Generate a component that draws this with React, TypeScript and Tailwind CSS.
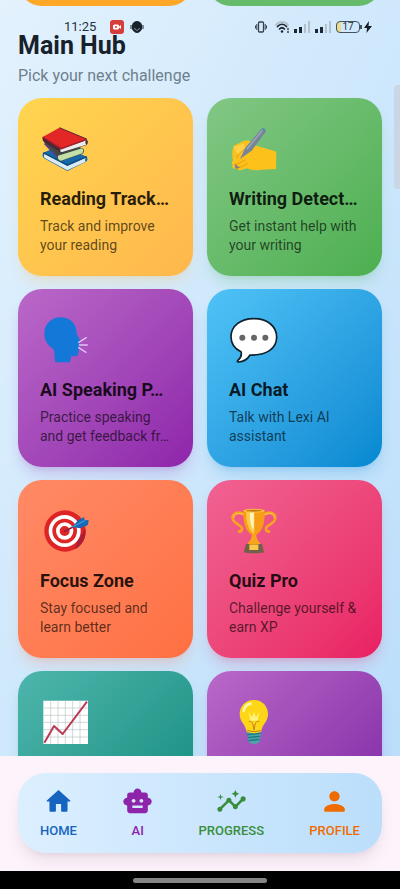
import React from "react";
import { MdInsights, MdSmartToy } from "react-icons/md";

interface HubCard {
  id: string;
  title: string;
  lines: string[];
  gradient: string;
  icon: React.ReactNode;
}

interface NavItem {
  id: string;
  label: string;
  color: string;
  icon: React.ReactNode;
}

const BooksIcon = () => (
  <svg viewBox="90 99 150 150" className="size-[50px]" aria-hidden="true">
    {/* blue book */}
    <path d="M100 188l52-22 78 34c4 4 3 12-2 15l-56 28-70-38c-5-5-6-12-2-17z" fill="#1668a8" />
    <path d="M104 192l68 36 56-25c-4 4-4 8-1 12l-55 26-68-37c-3-4-3-8 0-12z" fill="#dcebf2" />
    <path d="M100 188l72 37 58-25" fill="none" stroke="#0d4a7d" strokeWidth="4" />
    {/* green book */}
    <path d="M102 156l46-10 72 30c3 5 2 12-2 15l-66 23c-8-1-12-7-11-13z" fill="#3c4a42" />
    <path d="M144 197l72-22c5 4 4 10 1 15l-64 22c-8-1-11-8-9-15z" fill="#c5dfa8" />
    <path d="M104 160l38 40" stroke="#5b3d72" strokeWidth="6" />
    {/* red book */}
    <path d="M98 141c-2 7 1 13 6 16l50 31 76-23c5-6 5-13-1-17z" fill="#4a2734" />
    <path d="M153 176l76-25c-4 4-4 9 0 13l-72 22c-7 1-8-6-4-10z" fill="#e7edef" />
    <path d="M98 141l50-28 82 34-76 28z" fill="#e32727" />
    <path d="M98 141l56 35 76-28" fill="none" stroke="#a91d28" strokeWidth="4" />
    <path d="M148 113l82 34" stroke="#5b2430" strokeWidth="3" />
  </svg>
);

const WritingIcon = () => (
  <svg viewBox="87 99 150 150" className="size-[50px]" aria-hidden="true">
    <path
      d="M101 168l28-14c8-4 18-3 24 1l16 12 57 17c3 1 3 4 3 7l-1 46-45 2c-15 4-30 1-42-4l-20 6c-5 1-9-3-7-7l-9 3c-7-1-10-7-7-12-4-5-3-10 1-14-3-14-3-30 2-43z"
      fill="#fcc21b"
    />
    <path d="M101 170l15 28 20-14-4-23z" fill="#fdd24a" />
    <path
      d="M104 224c12-2 22-7 30-13M112 234c14-3 24-8 32-15M136 176c-10 8-20 16-26 26"
      fill="none"
      stroke="#eeaa10"
      strokeWidth="4"
      strokeLinecap="round"
    />
    <path d="M183 118l14 8-42 56-35 25 16-34z" fill="#758698" />
    <path d="M183 118l4-3c3-2 11 2 10 6v5z" fill="#5686ad" />
    <path d="M187 121l-46 56" stroke="#a3aab5" strokeWidth="4" />
    <path d="M104 221l16 12-14 3z" fill="#7e7f87" />
  </svg>
);

const SpeakingIcon = () => (
  <svg viewBox="90 87 150 150" className="size-[50px]" aria-hidden="true">
    <path
      d="M153 97c-28-1-50 20-50 49 0 20 10 33 24 44 4 4 6 8 6 14l2 24c0 3 3 4 6 4h34c4 0 6-2 6-5l3-15c9 3 17 2 20-3 2-4 0-8 2-11 3-4 1-6-1-8 3-3 3-7 2-12l2-5c3-2 3-5 1-8l-10-19c0-29-18-48-47-49z"
      fill="#1478d8"
    />
    <path d="M206 172l23-14M208 180h24M206 188l22 14" stroke="#dfc4f4" strokeWidth="4" strokeLinecap="round" fill="none" />
  </svg>
);

const ChatIcon = () => (
  <svg viewBox="87 87 150 150" className="size-[50px]" aria-hidden="true">
    <path
      d="M161 101c-39 0-68 22-68 54 0 21 11 36 30 45 3 9-1 19-10 27-2 3 0 4 3 4 16-1 27-9 34-21 49 2 80-19 80-53 0-34-28-56-69-56z"
      fill="#fff"
      stroke="#10202c"
      strokeWidth="5"
      strokeLinejoin="round"
    />
    <circle cx="127" cy="158" r="9" fill="#666" />
    <circle cx="162" cy="158" r="9" fill="#666" />
    <circle cx="196" cy="158" r="9" fill="#666" />
  </svg>
);

const TargetIcon = () => (
  <svg viewBox="90 90 150 150" className="size-[50px]" aria-hidden="true">
    <circle cx="165" cy="168" r="62" fill="#dd2326" />
    <path d="M194 223c24-12 36-37 32-62l-24 38z" fill="#ad1d36" />
    <circle cx="164" cy="168" r="48" fill="#fff" />
    <circle cx="164" cy="168" r="37" fill="#df2525" />
    <circle cx="164" cy="168" r="26" fill="#fff" />
    <circle cx="164" cy="168" r="15" fill="#df2525" />
    <path d="M164 169l38-20" stroke="#8b2440" strokeWidth="5" strokeLinecap="round" />
    <path d="M187 156l17-20 18-10 2 10 12-1-2 15-24 10z" fill="#1769b5" />
    <path d="M187 156l37-19" stroke="#3998df" strokeWidth="4" />
  </svg>
);

const TrophyIcon = () => (
  <svg viewBox="87 90 150 150" className="size-[50px]" aria-hidden="true">
    <path
      d="M132 118c-15-10-35-5-34 11 1 13 12 17 23 24 9 6 5 17-4 17M192 118c15-10 35-5 34 11-1 13-12 17-23 24-9 6-5 17 4 17"
      fill="none"
      stroke="#f9a51c"
      strokeWidth="8"
      strokeLinecap="round"
    />
    <path d="M132 120c-15-8-31-4-30 8M192 120c15-8 31-4 30 8" fill="none" stroke="#ffd052" strokeWidth="3" />
    <path d="M138 207h48l6 25c-17 4-44 4-61 0z" fill="#72604a" />
    <path d="M148 209h27v16h-27z" fill="#fcc84b" />
    <path d="M155 175h14c-1 13 4 22 13 31-13 4-28 4-40 0 10-9 14-18 13-31z" fill="#f7a51d" />
    <path d="M130 106h64c1 38-6 59-23 72-5 3-13 3-18 0-17-13-24-34-23-72z" fill="#f89e16" />
    <path d="M139 110h24v67c-15-7-26-31-24-67z" fill="#fdca48" />
    <path d="M150 112h12l-1 54c-9-12-12-30-11-54z" fill="#fff3bd" />
    <ellipse cx="162" cy="107" rx="32" ry="6" fill="#ffc43b" />
    <ellipse cx="162" cy="107" rx="24" ry="3" fill="#c87816" />
  </svg>
);

const ChartIcon = () => (
  <svg viewBox="120 108 150 150" className="size-[50px]" aria-hidden="true">
    <path d="M130 122h134v130H130z" fill="#fff" />
    <path
      d="M152 122v130M174 122v130M196 122v130M218 122v130M240 122v130M130 144h134M130 166h134M130 187h134M130 209h134M130 231h134"
      stroke="#b9c4c5"
      strokeWidth="2"
    />
    <path d="M133 248l29-50 26 24 73-97" fill="none" stroke="#b93a51" strokeWidth="6" strokeLinejoin="round" />
  </svg>
);

const BulbIcon = () => (
  <svg viewBox="87 108 150 150" className="size-[50px]" aria-hidden="true">
    <path d="M140 216h44l-4 26c-6 13-29 13-35 0z" fill="#4da4a8" />
    <path d="M141 224l41-4M143 233l38-4M145 242l34-4" stroke="#1f7787" strokeWidth="4" />
    <path d="M162 120c-26 0-43 19-43 42 0 25 18 30 20 52 12 8 33 8 45 0 2-22 20-27 20-52 0-23-17-42-42-42z" fill="#fdd717" />
    <path d="M146 186c8-8 13 3 16 24M178 186c-8-8-13 3-16 24M142 211c13 5 28 5 40 0" fill="none" stroke="#c67b14" strokeWidth="3" />
    <path d="M146 156l5 26h22l5-26-10 16-6-16-6 16z" fill="#fff27a" />
    <path d="M131 153c2-12 10-20 21-22" fill="none" stroke="#fff7a5" strokeWidth="8" strokeLinecap="round" />
  </svg>
);

const cards: HubCard[] = [
  {
    id: "reading",
    title: "Reading Track…",
    lines: ["Track and improve", "your reading"],
    gradient: "from-[#ffd54f] to-[#ffb74d] shadow-[#ffb74d]/20",
    icon: <BooksIcon />,
  },
  {
    id: "writing",
    title: "Writing Detect…",
    lines: ["Get instant help with", "your writing"],
    gradient: "from-[#81c784] to-[#4caf50] shadow-[#4caf50]/20",
    icon: <WritingIcon />,
  },
  {
    id: "speaking",
    title: "AI Speaking P…",
    lines: ["Practice speaking", "and get feedback fr…"],
    gradient: "from-[#ba68c8] to-[#8e24aa] shadow-[#8e24aa]/20",
    icon: <SpeakingIcon />,
  },
  {
    id: "chat",
    title: "AI Chat",
    lines: ["Talk with Lexi AI", "assistant"],
    gradient: "from-[#4fc3f7] to-[#0288d1] shadow-[#0288d1]/20",
    icon: <ChatIcon />,
  },
  {
    id: "focus",
    title: "Focus Zone",
    lines: ["Stay focused and", "learn better"],
    gradient: "from-[#ff8a65] to-[#ff7043] shadow-[#ff7043]/20",
    icon: <TargetIcon />,
  },
  {
    id: "quiz",
    title: "Quiz Pro",
    lines: ["Challenge yourself &", "earn XP"],
    gradient: "from-[#f06292] to-[#e91e63] shadow-[#e91e63]/20",
    icon: <TrophyIcon />,
  },
  {
    id: "stats",
    title: "",
    lines: [],
    gradient: "from-[#4db6ac] to-[#00897b] shadow-[#00897b]/20",
    icon: <ChartIcon />,
  },
  {
    id: "ideas",
    title: "",
    lines: [],
    gradient: "from-[#ba68c8] to-[#7b1fa2] shadow-[#7b1fa2]/20",
    icon: <BulbIcon />,
  },
];

const navItems: NavItem[] = [
  {
    id: "home",
    label: "HOME",
    color: "text-[#1565c0]",
    icon: (
      <svg viewBox="0 0 24 24" className="size-[31px]" fill="currentColor" aria-hidden="true">
        <path d="M10 19v-5h4v5c0 .55.45 1 1 1h3c.55 0 1-.45 1-1v-7h1.7c.46 0 .68-.57.33-.87L12.67 3.6c-.38-.34-.96-.34-1.34 0l-8.36 7.53c-.34.3-.13.87.33.87H5v7c0 .55.45 1 1 1h3c.55 0 1-.45 1-1z" />
      </svg>
    ),
  },
  { id: "ai", label: "AI", color: "text-[#8e24aa]", icon: <MdSmartToy className="size-[31px]" /> },
  { id: "progress", label: "PROGRESS", color: "text-[#388e3c]", icon: <MdInsights className="size-[31px]" /> },
  {
    id: "profile",
    label: "PROFILE",
    color: "text-[#ef6c00]",
    icon: (
      <svg viewBox="0 0 24 24" className="size-[31px]" fill="currentColor" aria-hidden="true">
        <path d="M12 12c2.21 0 4-1.79 4-4s-1.79-4-4-4-4 1.79-4 4 1.79 4 4 4zm0 2c-2.67 0-8 1.34-8 4v1c0 .55.45 1 1 1h14c.55 0 1-.45 1-1v-1c0-2.66-5.33-4-8-4z" />
      </svg>
    ),
  },
];

function SignalIcon() {
  return (
    <svg viewBox="0 0 17 12" className="h-3 w-[17px]" aria-hidden="true">
      <path d="M0 8h3v4H0zM5 6h3v6H5z" fill="#1b2630" />
      <path d="M10 3h2v9h-2zM14 0h2v12h-2z" fill="#b4c1cc" />
    </svg>
  );
}

function StatusBar() {
  return (
    <div className="absolute inset-x-0 top-0 z-10 flex h-[54px] items-center pr-7 pl-16 text-[#26323c]">
      <span className="text-[13px] leading-3">11:25</span>
      <svg viewBox="0 0 14 14" className="ml-3.5 size-3.5" aria-hidden="true">
        <rect width="14" height="14" rx="3" fill="#d63c3c" />
        <rect x="3" y="4.500" width="6" height="5" rx="1.500" fill="#fff" />
        <path d="M8.500 7L11 5v4z" fill="#fff" />
        <circle cx="6" cy="7" r="1" fill="#d63c3c" />
      </svg>
      <svg viewBox="0 0 14 12" className="ml-1.5 h-3 w-3.5" aria-hidden="true">
        <path d="M2 4C3 1 5 0 7 0s4 1 5 4v4c-1 2-3 4-5 4S3 10 2 8z" fill="#18222b" />
        <path d="M1 4v4M13 4v4" stroke="#5d6872" strokeWidth="1.500" />
        <path d="M4.500 7c1 3 4 3 5 0" fill="none" stroke="#8d9aa5" />
      </svg>

      <div className="ml-auto flex items-center">
        <svg viewBox="0 0 12 12" className="size-3" fill="none" stroke="#35414b" strokeWidth="1.3" aria-hidden="true">
          <rect x="3.5" y="1" width="5" height="10" rx="1" />
          <path d="M1.8 3v6M10.2 3v6M.5 4.5v3M11.5 4.5v3" strokeWidth="1" />
        </svg>
        <svg viewBox="0 0 15 12" className="ml-2 h-3 w-[15px]" fill="none" strokeLinecap="round" aria-hidden="true">
          <path d="M1 4c3-4 9-4 12 0" stroke="#b4c1cc" strokeWidth="1.8" />
          <path d="M2.500 5.500c2.500-3 6.500-3 9 0M4.500 8c1.500-1.500 3.500-1.500 5 0" stroke="#1b2630" strokeWidth="1.700" />
          <circle cx="7" cy="10.500" r="1.300" fill="#1b2630" />
          <path d="M13 7.500v1M13 10.500v1" stroke="#35414b" strokeWidth="1.500" />
        </svg>
        <div className="ml-1 flex gap-1">
          <SignalIcon />
          <SignalIcon />
        </div>
        <div className="ml-1 flex h-3 w-6 items-center justify-center rounded-[4px] border border-[#45515b] bg-linear-to-r from-[#eadc90] from-20% to-transparent to-20% text-[10px] leading-none">
          17
        </div>
        <div className="h-1 w-0.5 bg-[#45515b]" />
        <svg viewBox="0 0 8 12" className="ml-0.5 h-3 w-2" fill="#141c24" aria-hidden="true">
          <path d="M5 0L0 7h3L2.500 12 8 5H4.500z" />
        </svg>
      </div>
    </div>
  );
}

function CardButton({ card }: { card: HubCard }) {
  return (
    <button
      type="button"
      aria-label={card.title ? undefined : card.id}
      className={`flex min-h-[178px] flex-col items-start rounded-3xl bg-linear-to-br px-[22px] pt-[25px] pb-4 text-left shadow-lg ${card.gradient}`}
    >
      {card.icon}
      <span className="mt-3 text-lg leading-7 font-bold whitespace-nowrap text-black/85">{card.title}</span>
      <span className="mt-1 text-sm leading-[19px] whitespace-nowrap text-black/65">
        {card.lines.map((line) => (
          <span key={line} className="block">
            {line}
          </span>
        ))}
      </span>
    </button>
  );
}

export default function App() {
  return (
    <div className="relative flex h-dvh flex-col overflow-hidden bg-[#fdf3fb] font-[Roboto,sans-serif]">
      <StatusBar />

      <main className="relative min-h-0 flex-1 overflow-hidden bg-linear-to-br from-[#e3f2fd] to-[#bbdefb] px-[18px]">
        {/* Tail of the row scrolled past the top */}
        <div className="-mt-[18px] grid grid-cols-2 gap-x-3.5">
          <div className="h-6 rounded-b-3xl bg-[#ffa726]" />
          <div className="h-6 rounded-b-3xl bg-[#66bb6a]" />
        </div>

        <header className="pt-6">
          <h1 className="text-[25px] leading-8 font-bold text-[#17212b]">Main Hub</h1>
          <p className="mt-1 text-base leading-5 text-[#6f7f8c]">Pick your next challenge</p>
        </header>

        <section className="mt-3 grid grid-cols-2 gap-x-3.5 gap-y-[13px]">
          {cards.map((card) => (
            <CardButton key={card.id} card={card} />
          ))}
        </section>

        {/* Scroll thumb */}
        <div className="absolute top-[85px] right-0 h-[104px] w-1.5 rounded-l-sm bg-[#c9cfdc]/70" />
      </main>

      <nav className="px-[18px] pt-[17px] pb-[18px]">
        <div className="flex h-20 items-center justify-between rounded-[28px] bg-linear-to-r from-[#dcefff] to-[#bbdefb] px-[22px] shadow-lg shadow-[#7d6478]/15">
          {navItems.map((item) => (
            <button key={item.id} type="button" className={`flex flex-col items-center gap-1 ${item.color}`}>
              {item.icon}
              <span className="text-[13px] leading-5 font-medium">{item.label}</span>
            </button>
          ))}
        </div>
      </nav>

      <div className="flex h-[18px] shrink-0 items-center justify-center bg-black">
        <div className="h-[5px] w-1/3 rounded-full bg-[#858585]" />
      </div>
    </div>
  );
}
